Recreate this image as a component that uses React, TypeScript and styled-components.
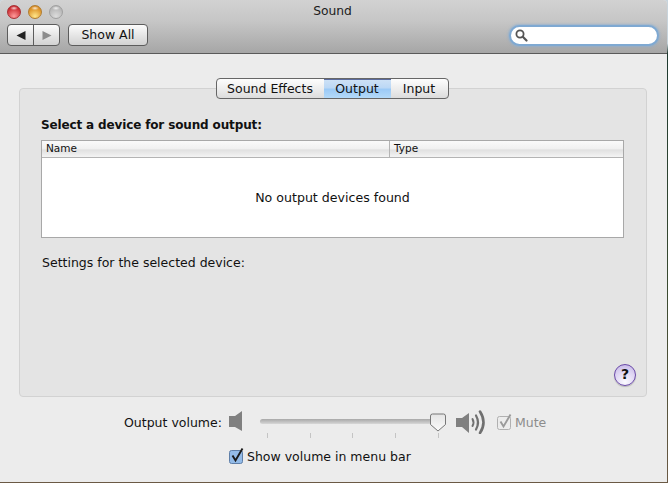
import { createGlobalStyle, styled } from "styled-components";

const GlobalStyle = createGlobalStyle`
  html, body {
    margin: 0;
    padding: 0;
    background: #6b5a45;
  }
  body {
    font-family: "DejaVu Sans", "Liberation Sans", sans-serif;
    overflow: hidden;
  }
`;

const Desktop = styled.div`
  width: 668px;
  height: 483px;
  overflow: hidden;
  background: linear-gradient(#c8d4dc, #c8d4dc 9%, #1e3a30 11%, #3a4a30 60%, #6b5a45);
`;

const Window = styled.div`
  width: 667px;
  height: 482px;
  display: flex;
  flex-direction: column;
  background: #ececec;
  border-radius: 4px 4px 0 0;
  overflow: hidden;
`;

const TitleBar = styled.div`
  height: 53px;
  flex: none;
  box-sizing: content-box;
  border-bottom: 1px solid #5a5a5a;
  background: linear-gradient(#d2d2d2, #c6c6c6 40%, #a6a6a6);
  display: flex;
  flex-direction: column;
  position: relative;
`;

const TitleRow = styled.div`
  height: 23px;
  display: flex;
  align-items: center;
  padding-left: 7px;
  gap: 7px;
`;

const Light = styled.span<{ $top: string; $bottom: string; $edge: string }>`
  width: 14px;
  height: 14px;
  border-radius: 50%;
  box-sizing: border-box;
  border: 1px solid ${(p) => p.$edge};
  background:
    radial-gradient(ellipse 4px 2px at 50% 18%, #ffffffcc, transparent),
    radial-gradient(circle at 50% 85%, ${(p) => p.$bottom}, ${(p) => p.$top} 75%);
`;

const Title = styled.div`
  position: absolute;
  left: 0;
  right: 2px;
  top: 3px;
  text-align: center;
  font-size: 12.3px;
  line-height: 16px;
  color: #1c1c1c;
`;

const ToolRow = styled.div`
  display: flex;
  align-items: center;
  padding: 1px 7px 0 7px;
`;

const NavGroup = styled.div`
  width: 53px;
  height: 22px;
  box-sizing: border-box;
  border: 1px solid #5c5c5c;
  border-radius: 4px;
  background: linear-gradient(#fcfcfc, #e4e4e4 55%, #d2d2d2);
  display: grid;
  grid-template-columns: 26px 1fr;
  margin-right: 8px;
`;

const NavCell = styled.div<{ $divider?: boolean }>`
  display: flex;
  align-items: center;
  justify-content: center;
  border-right: ${(p) => (p.$divider ? "1px solid #5c5c5c" : "none")};
`;

const ShowAll = styled.div`
  width: 80px;
  height: 22px;
  box-sizing: border-box;
  border: 1px solid #5c5c5c;
  border-radius: 4px;
  background: linear-gradient(#fcfcfc, #e4e4e4 55%, #d2d2d2);
  font-size: 12.5px;
  line-height: 20px;
  text-align: center;
  color: #111;
`;

const Search = styled.div`
  margin-left: auto;
  width: 150px;
  height: 21px;
  margin-right: 1px;
  box-sizing: border-box;
  background: #fff;
  border: 2px solid #7fa9d2;
  border-radius: 11px;
  box-shadow: 0 0 2px 1px #88aed4aa;
  display: flex;
  align-items: center;
  padding-left: 3px;
`;

const Content = styled.div`
  flex: 1;
  display: flex;
  flex-direction: column;
  padding: 24px 20px 0 19px;
  min-height: 0;
`;

const TabStrip = styled.div`
  align-self: center;
  display: flex;
  height: 21px;
  box-sizing: border-box;
  border: 1px solid #666;
  border-radius: 4px;
  background: linear-gradient(#fdfdfd, #ececec 55%, #dcdcdc);
  overflow: hidden;
  position: relative;
  z-index: 1;
  margin-right: 2px;
  margin-bottom: -11px;
`;

const Tab = styled.div<{ $on?: boolean; $w: number }>`
  width: ${(p) => p.$w}px;
  font-size: 12.5px;
  line-height: 19px;
  text-align: center;
  color: #111;
  background: ${(p) => (p.$on ? "linear-gradient(#cfe2f6, #bcd8f5 45%, #9ccaf6 55%, #b4daf9)" : "none")};
  box-shadow: ${(p) => (p.$on ? "inset 0 1px #5a6a9c" : "none")};
`;

const Panel = styled.div`
  height: 309px;
  flex: none;
  box-sizing: border-box;
  border: 1px solid #d2d2d2;
  border-radius: 4px;
  background: #e4e4e4;
  padding: 28px 22px 0 21px;
  display: flex;
  flex-direction: column;
  position: relative;
`;

const Heading = styled.div`
  font-size: 12px;
  letter-spacing: -0.14px;
  font-weight: bold;
  line-height: 16px;
  color: #111;
  margin-bottom: 7px;
`;

const Table = styled.div`
  height: 98px;
  box-sizing: border-box;
  border: 1px solid #a8a8a8;
  background: #fff;
  display: flex;
  flex-direction: column;
`;

const TableHead = styled.div`
  height: 16px;
  flex: none;
  border-bottom: 1px solid #b4b4b4;
  background: linear-gradient(#fafafa, #f0f0f0 50%, #e0e0e0 55%, #f4f4f4);
  display: grid;
  grid-template-columns: 348px 1fr;
  font-size: 10.5px;
  line-height: 14px;
  color: #111;
`;

const HeadCell = styled.div<{ $divider?: boolean }>`
  padding-left: 4px;
  border-right: ${(p) => (p.$divider ? "1px solid #b4b4b4" : "none")};
`;

const TableBody = styled.div`
  flex: 1;
  display: flex;
  align-items: center;
  justify-content: center;
  font-size: 12.6px;
  color: #111;
`;

const Settings = styled.div`
  margin-top: 17px;
  margin-left: 1px;
  font-size: 12.5px;
  line-height: 16px;
  color: #111;
`;

const Help = styled.div`
  position: absolute;
  right: 10px;
  bottom: 10px;
  width: 22px;
  height: 22px;
  box-sizing: border-box;
  border-radius: 50%;
  border: 1.5px solid #6a49a8;
  background: radial-gradient(circle at 50% 85%, #fbfaff, #dcd2f2 60%, #bfb0e4);
  box-shadow: 0 1px 1px #0003;
  font-size: 14px;
  font-weight: bold;
  line-height: 19px;
  text-align: center;
  color: #111;
`;

const VolumeRow = styled.div`
  display: flex;
  align-items: center;
  height: 24px;
  margin-top: 13px;
  padding-left: 105px;
`;

const VolumeLabel = styled.div`
  font-size: 12.5px;
  color: #111;
  width: 105px;
`;

const SliderWrap = styled.div`
  width: 186px;
  height: 24px;
  margin: 0 10px 0 17px;
  position: relative;
`;

const Track = styled.div`
  position: absolute;
  left: 0;
  right: 0;
  top: 9px;
  height: 5px;
  border-radius: 3px;
  background: linear-gradient(#a8a8a8, #c8c8c8 70%, #d8d8d8);
`;

const Tick = styled.span<{ $x: number }>`
  position: absolute;
  top: 23px;
  left: ${(p) => p.$x}px;
  width: 1px;
  height: 5px;
  background: #c4c4c4;
`;

const Thumb = styled.svg`
  position: absolute;
  left: 170px;
  top: 3px;
`;

const MuteBox = styled.div`
  display: flex;
  align-items: center;
  margin-left: 11px;
  font-size: 12.5px;
  color: #8c8c8c;
  gap: 3px;
`;

const ShowRow = styled.div`
  display: flex;
  align-items: center;
  gap: 3px;
  margin-left: 210px;
  margin-top: 14px;
  font-size: 12.5px;
  color: #111;
`;

const Check = ({ on }: { on: boolean }) => (
  <svg width="15" height="16" viewBox="0 0 15 16">
    <rect
      x="0.5"
      y="2.5"
      width="13"
      height="13"
      rx="2"
      fill={on ? "#93bbe8" : "#ececec"}
      stroke={on ? "#5f7fa8" : "#b0b0b0"}
    />
    <path
      d="M3.5 7.5 L6.5 12.5 L13.5 0.5"
      fill="none"
      stroke={on ? "#1a1a1a" : "#9a9a9a"}
      strokeWidth="1.9"
    />
  </svg>
);

const Speaker = ({ loud }: { loud?: boolean }) =>
  loud ? (
    <svg width="30" height="24" viewBox="0 0 30 24">
      <path d="M0 8 H6 L13 3 V23 L6 17 H0 Z" fill="#808080" />
      <g fill="none" stroke="#707070" strokeLinecap="round">
        <path d="M16.5 9 Q18.5 12.5 16.5 16" strokeWidth="2" />
        <path d="M20 5.5 Q24 12.5 20 19.5" strokeWidth="2.2" />
        <path d="M24 1.5 Q31 12.5 24 23" strokeWidth="2.6" />
      </g>
    </svg>
  ) : (
    <svg width="14" height="22" viewBox="0 0 14 22">
      <path d="M0 5 H6 L13 0 V20 L6 16 H0 Z" fill="#808080" />
    </svg>
  );

export default function App() {
  return (
    <Desktop>
      <GlobalStyle />
      <Window>
        <TitleBar>
          <Title>Sound</Title>
          <TitleRow>
            <Light $top="#c8262c" $bottom="#ff9a9a" $edge="#a83034" />
            <Light $top="#d98a1e" $bottom="#ffe68a" $edge="#b07c30" />
            <Light $top="#b4b4b4" $bottom="#dcdcdc" $edge="#a0a0a0" />
          </TitleRow>
          <ToolRow>
            <NavGroup>
              <NavCell $divider>
                <svg width="10" height="9" viewBox="0 0 10 9">
                  <path d="M0.5 4.5 L9.5 0 V9 Z" fill="#222" />
                </svg>
              </NavCell>
              <NavCell>
                <svg width="10" height="9" viewBox="0 0 10 9">
                  <path d="M9.5 4.5 L0.5 0 V9 Z" fill="#8c8c8c" />
                </svg>
              </NavCell>
            </NavGroup>
            <ShowAll>Show All</ShowAll>
            <Search>
              <svg width="14" height="14" viewBox="0 0 14 14">
                <circle cx="6" cy="6" r="3.6" fill="none" stroke="#555" strokeWidth="1.8" />
                <path d="M8.8 8.8 L12.5 12.5" stroke="#555" strokeWidth="2.2" strokeLinecap="round" />
              </svg>
            </Search>
          </ToolRow>
        </TitleBar>
        <Content>
          <TabStrip>
            <Tab $w={107}>Sound Effects</Tab>
            <Tab $w={67} $on>
              Output
            </Tab>
            <Tab $w={57}>Input</Tab>
          </TabStrip>
          <Panel>
            <Heading>Select a device for sound output:</Heading>
            <Table>
              <TableHead>
                <HeadCell $divider>Name</HeadCell>
                <HeadCell>Type</HeadCell>
              </TableHead>
              <TableBody>No output devices found</TableBody>
            </Table>
            <Settings>Settings for the selected device:</Settings>
            <Help>?</Help>
          </Panel>
          <VolumeRow>
            <VolumeLabel>Output volume:</VolumeLabel>
            <Speaker />
            <SliderWrap>
              <Track />
              {[7, 50, 92, 135, 178].map((x) => (
                <Tick key={x} $x={x} />
              ))}
              <Thumb width="16" height="20" viewBox="0 0 16 20">
                <defs>
                  <linearGradient id="thumb" x1="0" y1="0" x2="0" y2="1">
                    <stop offset="0" stopColor="#e4e4e4" />
                    <stop offset="1" stopColor="#fbfbfb" />
                  </linearGradient>
                </defs>
                <path
                  d="M0.5 3 Q0.5 1 2.5 1 H13.5 Q15.5 1 15.5 3 V11.5 L8 18 L0.5 11.5 Z"
                  fill="url(#thumb)"
                  stroke="#777"
                />
              </Thumb>
            </SliderWrap>
            <Speaker loud />
            <MuteBox>
              <Check on={false} />
              Mute
            </MuteBox>
          </VolumeRow>
          <ShowRow>
            <Check on />
            Show volume in menu bar
          </ShowRow>
        </Content>
      </Window>
    </Desktop>
  );
}
